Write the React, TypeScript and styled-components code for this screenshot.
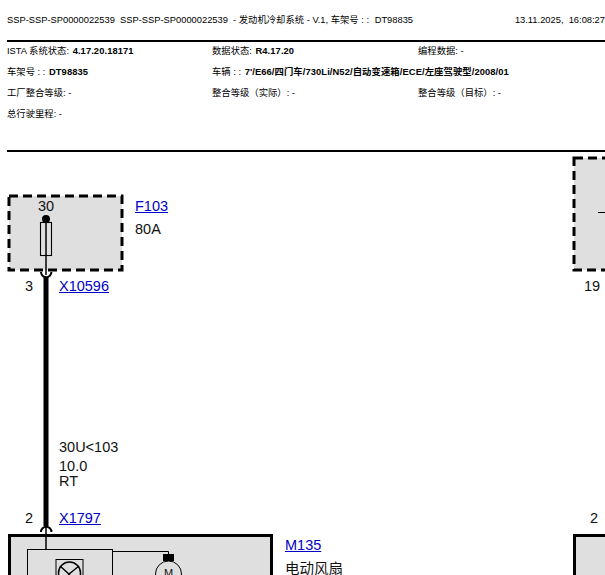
import React from "react";
import styled, { createGlobalStyle } from "styled-components";

const Global = createGlobalStyle`
  html, body { margin: 0; padding: 0; background: #fff; overflow: hidden; }
  body { font-family: "Liberation Sans", "Noto Sans CJK SC", sans-serif; color: #000; }
`;
const Page = styled.div`
  width: 605px; height: 575px; overflow: hidden; position: relative;
  display: flex; flex-direction: column; padding-left: 7px; box-sizing: border-box;
`;
const Title = styled.div`
  height: 42px; width: 640px; flex: none; display: flex; justify-content: space-between; align-items: flex-start;
  box-sizing: border-box; padding-top: 14px; font-size: 9.33px; line-height: 13px; white-space: pre;
  border-bottom: 2px solid #000;
`;
const Vin = styled.span` margin-left: 3px; `;
const Stamp = styled.span` margin-right: 42px; `;
const Info = styled.div`
  width: 640px; height: 110px; flex: none; box-sizing: border-box;
  display: grid; grid-template-columns: 205px 206px 1fr; grid-auto-rows: 21px; align-content: start;
  border-bottom: 2px solid #000; font-size: 9.33px;
`;
const Cell = styled.div<{ $span?: number }>`
  grid-column: span ${p => p.$span ?? 1}; padding-top: 3px; line-height: 13px; white-space: pre;
  b { font-weight: 700; letter-spacing: 0.1px; margin-left: 1px; }
`;
const Canvas = styled.div`
  position: relative; flex: 1; margin-left: -7px; width: 605px;
  font-size: 14.5px; line-height: 16px; color: #111;
`;
const Wiring = styled.svg`
  position: absolute; left: 0; top: 0; display: block;
`;
const Label = styled.span<{ $x: number; $y: number }>`
  position: absolute; left: ${p => p.$x}px; top: ${p => p.$y - 152}px; white-space: pre;
`;
const MotorMark = styled(Label)` font-size: 11px; `;
const Ref = styled.a<{ $x: number; $y: number }>`
  position: absolute; color: #0000c8; text-decoration: underline; white-space: pre;
  left: ${p => p.$x}px; top: ${p => p.$y - 152}px;
`;

export default function App() {
  return (
    <Page>
      <Global />
      <Title>
        <span>SSP-SSP-SP0000022539  SSP-SSP-SP0000022539  - 发动机冷却系统 - V.1, 车架号 : : <Vin>DT98835</Vin></span>
        <Stamp>13.11.2025,  16:08:27</Stamp>
      </Title>
      <Info>
        <Cell>ISTA 系统状态: <b>4.17.20.18171</b></Cell>
        <Cell>数据状态: <b>R4.17.20</b></Cell>
        <Cell>编程数据: -</Cell>
        <Cell>车架号 : : <b>DT98835</b></Cell>
        <Cell $span={2}>车辆 : : <b>7'/E66/四门车/730Li/N52/自动变速箱/ECE/左座驾驶型/2008/01</b></Cell>
        <Cell>工厂整合等级: -</Cell>
        <Cell>整合等级（实际）: -</Cell>
        <Cell>整合等级（目标）: -</Cell>
        <Cell $span={3}>总行驶里程: -</Cell>
      </Info>
      <Canvas>
        <Wiring width="605" height="423" viewBox="0 152 605 423" fill="none" stroke="#000">
          <rect x="9" y="196" width="113" height="74" fill="#dfdfdf" strokeWidth="3" strokeDasharray="9 5" />
          <circle cx="46" cy="219" r="4" fill="#000" stroke="none" />
          <rect x="40.5" y="222.5" width="11" height="33" strokeWidth="1.1" />
          <path d="M46 222V275" strokeWidth="1.5" />
          <path d="M41 272A5.2 5.2 0 0 0 51.4 272" strokeWidth="2" />
          <path d="M46 277V526" strokeWidth="5" />

          <rect x="574" y="158" width="60" height="112" fill="#dfdfdf" strokeWidth="3" strokeDasharray="9 5" />
          <path d="M598 212.5H605" strokeWidth="1" />

          <rect x="9.5" y="535.5" width="262" height="60" fill="#dfdfdf" strokeWidth="3" />
          <rect x="574.5" y="535.5" width="60" height="60" fill="#dfdfdf" strokeWidth="3" />
          <path d="M41 532A5.2 5.2 0 0 1 51.4 532" strokeWidth="2" />
          <path d="M46 527V549" strokeWidth="1.5" />
          <rect x="27.5" y="549.5" width="85" height="40" strokeWidth="1" />
          <path d="M112 551.5H168.5V555" strokeWidth="1" />
          <rect x="163" y="554" width="11" height="7" fill="#000" stroke="none" />
          <rect x="56" y="559.5" width="27" height="30" strokeWidth="1" />
          <circle cx="69.5" cy="573" r="11" strokeWidth="1.5" />
          <path d="M60 566L69 574L79 566M69 574L64 584M69 574L75 584" strokeWidth="1.4" />
          <circle cx="168.5" cy="574" r="13" strokeWidth="1" />
        </Wiring>
        <Label $x={38} $y={198}>30</Label>
        <Ref $x={135} $y={198}>F103</Ref>
        <Label $x={135} $y={221}>80A</Label>
        <Label $x={25} $y={278}>3</Label>
        <Ref $x={59} $y={278}>X10596</Ref>
        <Label $x={584} $y={278}>19</Label>
        <Label $x={59} $y={439}>30U&lt;103</Label>
        <Label $x={59} $y={458}>10.0</Label>
        <Label $x={59} $y={473}>RT</Label>
        <Label $x={25} $y={510}>2</Label>
        <Ref $x={59} $y={510}>X1797</Ref>
        <Label $x={590} $y={510}>2</Label>
        <Ref $x={285} $y={537}>M135</Ref>
        <Label $x={285} $y={561}>电动风扇</Label>
        <MotorMark $x={164} $y={565}>M</MotorMark>
      </Canvas>
    </Page>
  );
}
